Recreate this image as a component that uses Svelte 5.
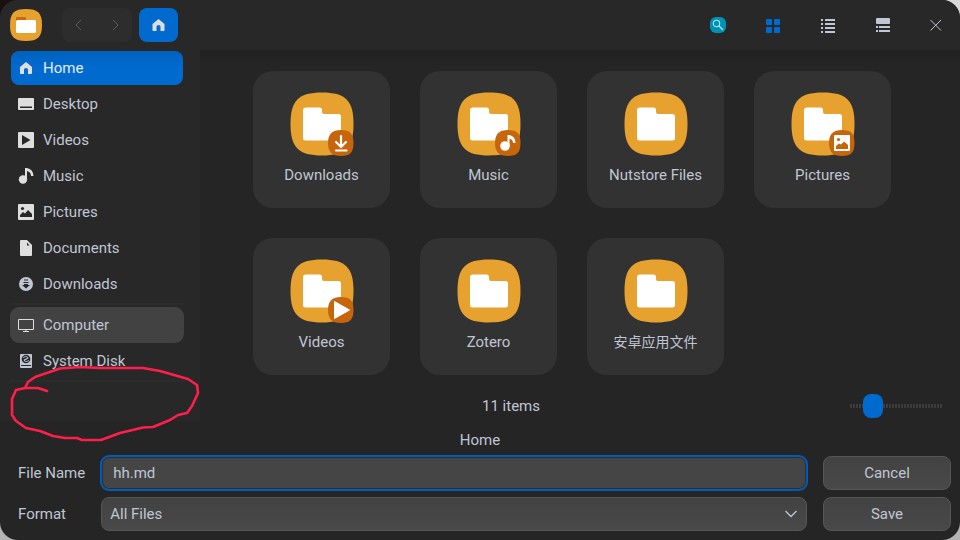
<script>
    //Places listed in the sidebar, a 'divider' is drawn under the ones that end a group
    const places = [
        {name: "Home", icon: "home"},
        {name: "Desktop", icon: "desktop"},
        {name: "Videos", icon: "video"},
        {name: "Music", icon: "music"},
        {name: "Pictures", icon: "picture"},
        {name: "Documents", icon: "document"},
        {name: "Downloads", icon: "download", divider: true},
        {name: "Computer", icon: "computer"},
        {name: "System Disk", icon: "disk", divider: true}
    ];

    //Folders shown in the icon view, 'badge' is the small emblem in the corner
    const folders = [
        {name: "Downloads", badge: "download"},
        {name: "Music", badge: "music"},
        {name: "Nutstore Files"},
        {name: "Pictures", badge: "picture"},
        {name: "Videos", badge: "video"},
        {name: "Zotero"},
        {name: "安卓应用文件", lang: "zh"}
    ];

    let current = "Home";
    let hovered = "Computer";
    let fileName = "hh.md";
    let format = "All Files";
    let iconSize = 18;
</script>

<div class="window">
    <header>
        <svg class="app-icon" viewBox="0 0 32 32" aria-hidden="true">
            <path fill="#e6a12f" d="M16 0C28 0 32 4 32 16S28 32 16 32 0 28 0 16 4 0 16 0Z"/>
            <path fill="#c9680c" d="M7 8h8q1 0 1 1v5H6V9q0-1 1-1Z"/>
            <rect x="6" y="11" width="20" height="13" rx="1.500" fill="#fff"/>
        </svg>
        <div class="history">
            <button aria-label="Back"><svg width="16" height="16" viewBox="0 0 16 16"><path d="M9 3 4 8l5 5"/></svg></button>
            <button aria-label="Forward"><svg width="16" height="16" viewBox="0 0 16 16"><path d="m6 3 5 5-5 5"/></svg></button>
        </div>
        <button class="crumb" aria-label="Home folder">
            <svg width="16" height="16" viewBox="0 0 16 16"><path fill="#dedede" d="M7.500 2 13.500 7v6q0 1-1 1h-3V9.500Q9.500 8 7.500 8t-2 1.500V14h-3q-1 0-1-1V7Z"/></svg>
        </button>
        <div class="tools">
            <button aria-label="Search">
                <svg width="16" height="16" viewBox="0 0 16 16">
                    <rect width="16" height="16" rx="6" fill="#0092b4"/>
                    <circle cx="6.500" cy="6.500" r="3.200" fill="none" stroke="#b9e5ee" stroke-width="1.100"/>
                    <path d="m9 9 4 4" stroke="#b9e5ee" stroke-width="1.300"/>
                </svg>
            </button>
            <button aria-label="Icon view">
                <svg width="14" height="16" viewBox="0 -2 14 16" fill="#006acf">
                    <rect width="6" height="6" rx="1"/><rect x="8" width="6" height="6" rx="1"/>
                    <rect y="8" width="6" height="6" rx="1"/><rect x="8" y="8" width="6" height="6" rx="1"/>
                </svg>
            </button>
            <button aria-label="List view">
                <svg width="14" height="16" viewBox="0 -2 14 16" fill="#c0c6d4" shape-rendering="crispEdges">
                    <path d="M0 0h2v2H0ZM4 0h10v2H4ZM0 4h2v2H0ZM4 4h10v2H4ZM0 8h2v2H0ZM4 8h10v2H4ZM0 12h2v2H0ZM4 12h10v2H4Z"/>
                </svg>
            </button>
            <button aria-label="Preview view">
                <svg width="14" height="16" viewBox="0 -1 14 16" fill="#c0c6d4">
                    <rect width="14" height="6" rx="1"/>
                    <path d="M0 8h2v2H0ZM3 8h11v2H3ZM0 12h2v2H0ZM3 12h11v2H3Z"/>
                </svg>
            </button>
        </div>
        <button class="close" aria-label="Close"><svg width="12" height="12" viewBox="0 0 12 12"><path d="m.5 1 10.500 10.500M11 1 .5 11.500" stroke="#c0c6d4"/></svg></button>
    </header>

    <div class="body">
        <nav>
            {#each places as place}
                <button class="place" class:active={place.name == current} class:hovered={place.name == hovered} on:click={()=>{current = place.name}}>
                    <svg width="16" height="16" viewBox="0 0 16 16" fill="#dedede" aria-hidden="true">
                        {#if place.icon == "home"}
                            <path d="M8 2 14 7v6q0 1-1 1h-3V9.500Q10 8 8 8t-2 1.500V14H3q-1 0-1-1V7Z"/>
                        {:else if place.icon == "desktop"}
                            <rect y="2" width="16" height="12" rx="1"/>
                            <path fill="#282828" d="M2 10.500h12V12H2Z"/>
                        {:else if place.icon == "video"}
                            <rect width="16" height="16" rx="1"/>
                            <path fill="#282828" d="m4 3 8.500 5L4 13Z"/>
                        {:else if place.icon == "music"}
                            <circle cx="5" cy="11.500" r="4.200"/>
                            <path d="M7 0h2q6 1 6.500 8H13q0-4-4-5v8.500H7Z"/>
                        {:else if place.icon == "picture"}
                            <rect width="16" height="16" rx="1"/>
                            <circle cx="4.500" cy="4.500" r="1.600" fill="#282828"/>
                            <path fill="#282828" d="M2 13v-2l3-3 2 1.500L10 6l4 4v3Z"/>
                        {:else if place.icon == "document"}
                            <path d="M3 0h6l5 5v10q0 1-1 1H3q-1 0-1-1V1q0-1 1-1Z"/>
                            <path fill="#282828" d="m9 2.500 2.500 3H9Z"/>
                        {:else if place.icon == "download"}
                            <circle cx="8" cy="8" r="7" fill="#c0c6d4"/>
                            <path fill="#282828" d="M6 3.500h4v1H6ZM5.500 6h5v1h-5ZM6 8h4v1h2L8 12.500 4 9h2Z"/>
                        {:else if place.icon == "computer"}
                            <path fill="none" stroke="#dedede" d="M.5 2.500h15v10H.5ZM8 13v2M5 14.500h6"/>
                        {:else if place.icon == "disk"}
                            <rect x="2" y="1" width="12" height="14" rx="1" fill="#c0c6d4"/>
                            <circle cx="8" cy="6" r="4.300" fill="#282828"/>
                            <path fill="none" stroke="#c0c6d4" stroke-width=".9" d="M5 4.500Q8 2.500 9.500 4T8 6 6.500 8 11 7.500M6 7.500 10 5"/>
                            <path fill="#282828" d="M3 12h10v1H3Z"/>
                        {/if}
                    </svg>
                    {place.name}
                </button>
                {#if place.divider}<hr>{/if}
            {/each}
        </nav>

        <main>
            <div class="folders">
                {#each folders as folder}
                    <button class="folder">
                        <svg width="64" height="64" viewBox="0 0 64 64" aria-hidden="true">
                            <path fill="#e6a12f" d="M32 .5C55.500.5 63.500 8.500 63.500 32S55.500 63.500 32 63.500.5 55.500.5 32 8.500.5 32 .5Z"/>
                            <path fill="#fff" d="M16 15.500h13.500q2.500 0 2.500 2.500v2q0 2 2 2h14.500q2.500 0 2.500 2.500v21.500q0 2.500-2.500 2.500H15.500Q13 48.500 13 46V18q0-2.500 3-2.500Z"/>
                            {#if folder.badge}
                                <path fill="#c6650c" d="M51 38C60 38 63.500 41.500 63.500 51S60 64 51 64 38 60 38 51 42 38 51 38Z"/>
                            {/if}
                            {#if folder.badge == "download"}
                                <path fill="none" stroke="#fff" stroke-width="2.200" stroke-linecap="round" stroke-linejoin="round" d="M51 44v11m-5-5 5 5 5-5M46 58.500h10.500"/>
                            {:else if folder.badge == "music"}
                                <circle cx="48" cy="54" r="4.800" fill="#fff"/>
                                <path fill="#fff" d="M50.500 43h2q5.500 1 6 8h-2.500q0-3.500-3.500-4.500V54h-2Z"/>
                            {:else if folder.badge == "picture"}
                                <rect x="43" y="43" width="16" height="16" rx="1" fill="#fff"/>
                                <circle cx="47.500" cy="47.500" r="1.600" fill="#c6650c"/>
                                <path fill="#c6650c" d="M45 57v-3l3-2.500 2 1L53 49.500l4 3.500v4Z"/>
                            {:else if folder.badge == "video"}
                                <path fill="#fff" stroke="#fff" stroke-linejoin="round" d="m44.500 42.500 15 8.500-15 8.500Z"/>
                            {/if}
                        </svg>
                        <span lang={folder.lang}>{folder.name}</span>
                    </button>
                {/each}
            </div>
            <div class="status">
                <span>11 items</span>
                <input type="range" min="0" max="100" bind:value={iconSize} aria-label="Icon size">
            </div>
        </main>
    </div>

    <p class="location">Home</p>

    <form on:submit|preventDefault>
        <label for="file-name">File Name</label>
        <input id="file-name" type="text" bind:value={fileName}>
        <button type="button">Cancel</button>
        <label for="format">Format</label>
        <div class="select">
            <select id="format" bind:value={format}>
                <option>All Files</option>
            </select>
            <svg width="12" height="8" viewBox="0 0 12 8" aria-hidden="true"><path d="m.5 1 5.500 5.500L11.500 1"/></svg>
        </div>
        <button type="submit">Save</button>
    </form>

    <!--Freehand mark over the empty part of the sidebar-->
    <svg class="mark" width="200" height="80" viewBox="0 364 200 80" aria-hidden="true">
        <path d="M47 391 38 388H25L16 390 12 399V415L16 421 26 428 40 431 53 436 65 438H77L82 440H101L120 433 143 427.500 153 427 170 420 178 415 187 413 192 406 198 393 197 385 188 379 160 371 143 368H100L80 367 60 368.500 35 377 28 382 25 388"/>
    </svg>
</div>

<style>
    /*Desktop behind the rounded window corners*/
    :global(body){
        background: linear-gradient(90deg, #1c0f10 50%, #d8d8d8 50%) top / 100% 50% no-repeat #b4b4b4;
    }

    .window{
        position: relative;
        display: flex;
        flex-direction: column;
        min-height: 100vh;
        overflow: hidden;
        border-radius: 18px;
        background-color: #252525;
        color: #c0c6d4;
        font: 15px/20px Roboto, "Noto Sans CJK SC", sans-serif;
    }

    button, input, select{
        box-sizing: border-box;
        margin: 0;
        padding: 0;
        border: none;
        background: none;
        color: inherit;
        font: inherit;
    }

    /*Title bar*/
    header{
        display: flex;
        align-items: center;
        height: 50px;
        padding: 0 6px 0 10px;
        background-color: #282828;
    }

    header button{
        display: flex;
        align-items: center;
        justify-content: center;
        width: 36px;
        height: 34px;
    }

    .app-icon{
        width: 32px;
        height: 32px;
    }

    .history{
        display: flex;
        margin: 0 7px 0 20px;
        border-radius: 8px;
        background-color: #2d2d2d;
    }

    .history button{
        width: 35px;
    }

    .history path{
        fill: none;
        stroke: #5a5c61;
    }

    header .crumb{
        width: 39px;
        border-radius: 8px;
        background-color: #006acf;
    }

    .tools{
        display: flex;
        gap: 19px;
        margin: 0 17px 0 auto;
    }

    /*Sidebar and folder view*/
    .body{
        display: flex;
        flex: 1;
        background-image: linear-gradient(#212121, #252525 16px);
    }

    nav{
        box-sizing: border-box;
        width: 200px;
        padding: 0 16px 0 10px;
        background-color: #282828;
    }

    .place{
        display: flex;
        align-items: center;
        gap: 9px;
        width: 100%;
        height: 36px;
        padding: 0 7px;
        border: 1px solid transparent;
        border-radius: 9px;
        text-align: left;
    }

    .place.active{
        background: linear-gradient(#0061bd, #006acf 16px) padding-box;
        color: #e6ebf5;
    }

    .place.hovered{
        background-color: #424242;
    }

    hr{
        height: 2px;
        margin: 1px 0 2px;
        border: none;
        background-color: #2c2c2c;
    }

    main{
        display: flex;
        flex: 1;
        flex-direction: column;
        justify-content: space-between;
    }

    .folders{
        display: grid;
        grid-template-columns: repeat(auto-fill, 137px);
        justify-content: center;
        gap: 30px;
        padding: 21px 16px 0 0;
    }

    .folder{
        display: flex;
        flex-direction: column;
        align-items: center;
        gap: 9px;
        height: 137px;
        padding-top: 21px;
        border-radius: 20px;
        background-color: #323232;
    }

    .folder span:lang(zh){
        font-size: 14px;
    }

    .status{
        display: flex;
        align-items: center;
        gap: 28px;
        padding: 0 18px 3px 0;
    }

    .status span{
        flex: 1;
        text-align: center;
    }

    input[type="range"]{
        width: 92px;
        height: 24px;
        appearance: none;
        background: repeating-linear-gradient(90deg, #3c3c3c 0 2px, transparent 2px 3px) center / 100% 4px no-repeat;
    }

    input[type="range"]::-webkit-slider-thumb{
        width: 20px;
        height: 24px;
        appearance: none;
        border-radius: 8px;
        background-color: #006acf;
    }

    .location{
        margin: 0;
        padding: 9px 0 6px;
        text-align: center;
    }

    /*File name and format fields*/
    form{
        display: grid;
        grid-template-columns: auto 1fr 128px;
        align-items: center;
        gap: 7px 16px;
        padding: 0 9px 9px 18px;
    }

    form button, form input, select{
        width: 100%;
        height: 34px;
        border: 1px solid #565656;
        border-radius: 8px;
        background-image: linear-gradient(#424242, #494949);
    }

    form input{
        padding: 0 11px;
        border-color: #005cb4;
        background-image: none;
        background-color: #454545;
        box-shadow: 0 0 0 1px #005cb4, inset 0 0 0 1px #2b2f35;
        outline: none;
    }

    .select{
        position: relative;
        height: 34px;
    }

    select{
        padding: 0 8px;
        appearance: none;
    }

    .select svg{
        position: absolute;
        top: 13px;
        right: 10px;
        pointer-events: none;
    }

    .select path{
        fill: none;
        stroke: #c0c6d4;
        stroke-width: 1.3;
    }

    .mark{
        position: absolute;
        left: 0;
        bottom: 96px;
        pointer-events: none;
    }

    .mark path{
        fill: none;
        stroke: #ff1f4b;
        stroke-width: 2.6;
        stroke-linecap: round;
        stroke-linejoin: round;
    }
</style>
